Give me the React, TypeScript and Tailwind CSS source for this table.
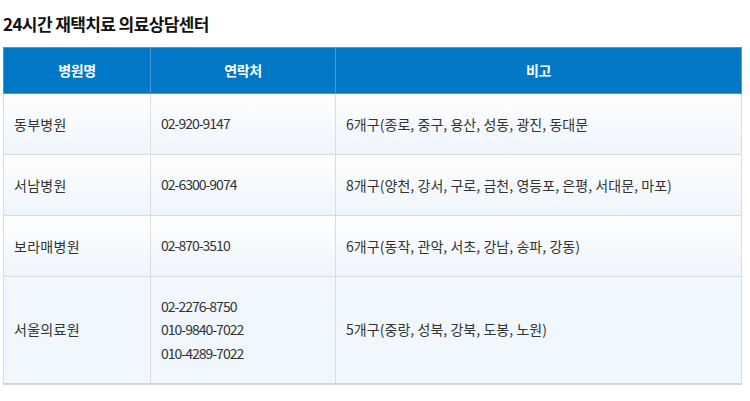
import React from 'react';

type Row = {
  name: string;
  phones: string[];
  note: string;
};

const rows: Row[] = [
  { name: '동부병원', phones: ['02-920-9147'], note: '6개구(종로, 중구, 용산, 성동, 광진, 동대문' },
  { name: '서남병원', phones: ['02-6300-9074'], note: '8개구(양천, 강서, 구로, 금천, 영등포, 은평, 서대문, 마포)' },
  { name: '보라매병원', phones: ['02-870-3510'], note: '6개구(동작, 관악, 서초, 강남, 송파, 강동)' },
  {
    name: '서울의료원',
    phones: ['02-2276-8750', '010-9840-7022', '010-4289-7022'],
    note: '5개구(중랑, 성북, 강북, 도봉, 노원)',
  },
];

const App: React.FC = () => {
  return (
    <div
      className="w-[750px] h-[401px] bg-white text-[#333] overflow-hidden"
      style={{ fontFamily: '"Noto Sans CJK KR", "Noto Sans", sans-serif' }}
    >
      <h2 className="pl-[3px] pt-[12px] h-[47px] text-[17px] leading-[24px] font-bold text-[#111] tracking-[-0.6px]">
        24시간 재택치료 의료상담센터
      </h2>
      <table className="ml-[3px] w-[738px] border-collapse table-fixed text-[14px]">
        <colgroup>
          <col className="w-[147px]" />
          <col className="w-[185px]" />
          <col className="w-[406px]" />
        </colgroup>
        <thead>
          <tr className="h-[46px] bg-[#0078c6] text-white font-bold tracking-[-0.4px]">
            <th className="border border-[#3f9ad8] font-bold">병원명</th>
            <th className="border border-[#3f9ad8] font-bold">연락처</th>
            <th className="border border-[#3f9ad8] font-bold">비고</th>
          </tr>
        </thead>
        <tbody>
          {rows.map((row, i) => (
            <tr
              key={row.name}
              className={
                i === rows.length - 1
                  ? 'h-[107px] bg-[#f0f7fd] border-b-2 border-[#d4d4d4]'
                  : 'h-[61px] bg-gradient-to-b from-white to-[#edf5fc]'
              }
            >
              <td className="border border-[#dcdcdc] pl-[10px] align-middle tracking-[0.3px]">{row.name}</td>
              <td className="border border-[#dcdcdc] pl-[10px] align-middle tracking-[-1px]">
                {row.phones.map((p) => (
                  <div key={p} className="leading-[23.5px]">
                    {p}
                  </div>
                ))}
              </td>
              <td className="border border-[#dcdcdc] pl-[10px] align-middle tracking-[0.05px]">{row.note}</td>
            </tr>
          ))}
        </tbody>
      </table>
    </div>
  );
};

export default App;
